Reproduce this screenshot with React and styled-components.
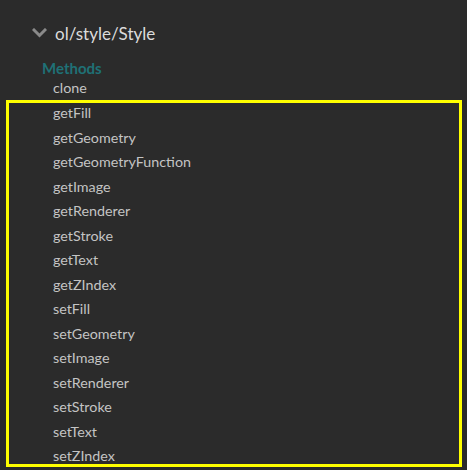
import React from 'react';
import styled, { createGlobalStyle } from 'styled-components';

const GlobalStyle = createGlobalStyle`
  html, body {
    margin: 0;
    padding: 0;
    background: #2b2b2b;
  }
  body {
    font-family: Lato, "Open Sans", sans-serif;
  }
`;

const Panel = styled.div`
  width: 467px;
  height: 470px;
  background: #2b2b2b;
  padding: 22px 0 0 0;
  box-sizing: border-box;
  overflow: hidden;
`;

const ModuleTitle = styled.div`
  display: flex;
  align-items: center;
  gap: 8px;
  padding-left: 32px;
  height: 22px;
  color: #dcdcdc;
  font-size: 17px;
`;

const Chevron = styled.svg`
  width: 15px;
  height: 10px;
  flex: none;
`;

const SectionHeading = styled.div`
  margin-top: 16px;
  padding-left: 42px;
  color: #1f7176;
  font-weight: 700;
  font-size: 15px;
  line-height: 16px;
`;

const MethodItem = styled.div`
  padding-left: 53px;
  color: #c4c4c4;
  font-size: 14.3px;
  line-height: 24.5px;
  height: 24.5px;
`;

const Highlight = styled.div`
  margin: -0.5px 5px 0 6px;
  height: 367px;
  box-sizing: border-box;
  border: 3px solid #ffff00;
  & > ${MethodItem} {
    padding-left: 44px;
  }
  & > ${MethodItem}:first-child {
    margin-top: -2px;
  }
`;

const first = ['clone'];
const highlighted = [
  'getFill',
  'getGeometry',
  'getGeometryFunction',
  'getImage',
  'getRenderer',
  'getStroke',
  'getText',
  'getZIndex',
  'setFill',
  'setGeometry',
  'setImage',
  'setRenderer',
  'setStroke',
  'setText',
  'setZIndex'
];

const App = () => (
  <>
    <GlobalStyle />
    <Panel>
      <ModuleTitle>
        <Chevron viewBox='0 0 15 10'>
          <path d='M2 2 L7.5 7.5 L13 2' fill='none' stroke='#8a8a8a' strokeWidth='3' strokeLinecap='square' />
        </Chevron>
        ol/style/Style
      </ModuleTitle>
      <SectionHeading>Methods</SectionHeading>
      {first.map(name => (
        <MethodItem key={name}>{name}</MethodItem>
      ))}
      <Highlight>
        {highlighted.map(name => (
          <MethodItem key={name}>{name}</MethodItem>
        ))}
      </Highlight>
    </Panel>
  </>
);

export default App;
